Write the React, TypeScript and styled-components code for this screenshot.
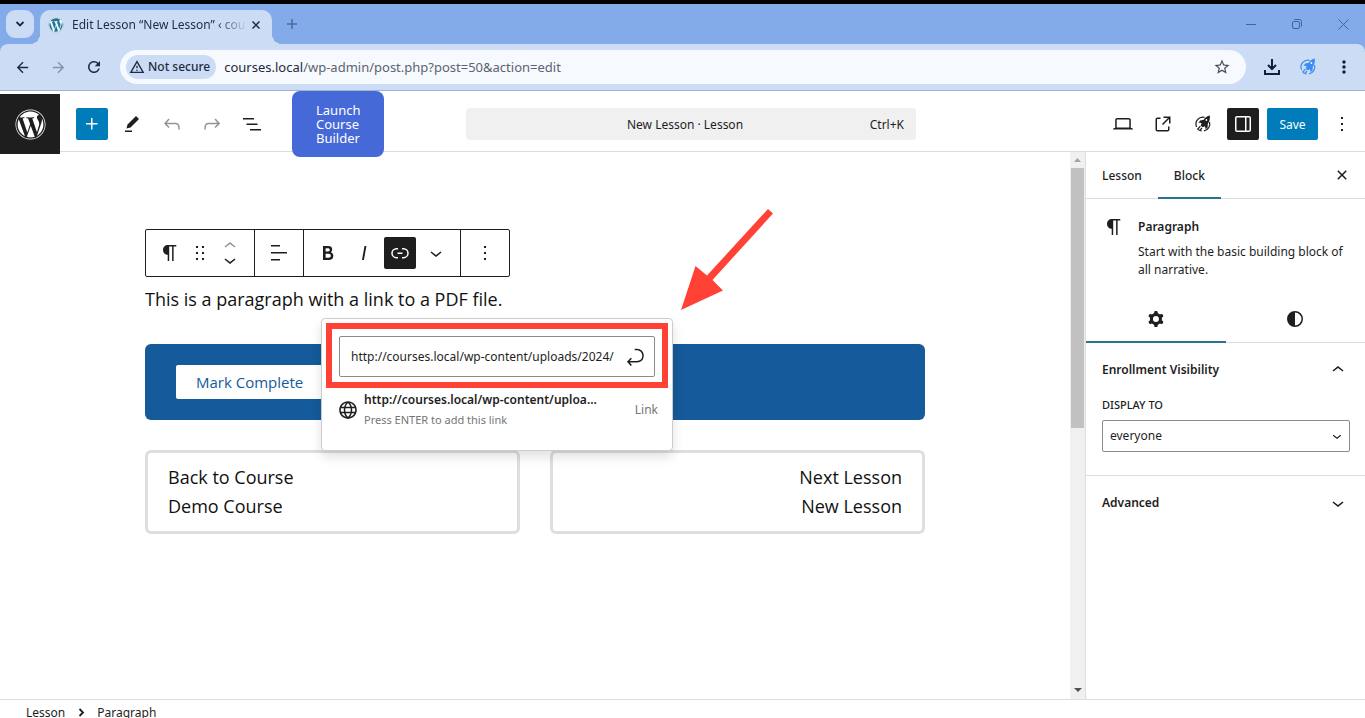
import React from "react";
import styled, { createGlobalStyle, css } from "styled-components";
import { FaWordpress } from "react-icons/fa";
import {
  MdArrowBack,
  MdArrowForward,
  MdRefresh,
  MdStarOutline,
  MdMoreVert,
  MdOutlineWarningAmber,
} from "react-icons/md";

const uiFont = `"Noto Sans", "Open Sans", sans-serif`;
const contentFont = `"Open Sans", "Noto Sans", sans-serif`;

const color = {
  ink: "#1e1e1e",
  line: "#dddddd",
  accent: "#007cba",
  tab: "#2a7391",
  frame: "#84abe9",
  chrome: "#ccdcf5",
  course: "#155a9a",
  mark: "#ff4136",
};

const GlobalStyle = createGlobalStyle`
  *, *::before, *::after { box-sizing: border-box; }
  body { margin: 0; background: #fff; color: ${color.ink}; font: 400 12px/18px ${uiFont}; }
  button, input, select { font: inherit; color: inherit; margin: 0; }
  button { border: 0; padding: 0; background: none; cursor: pointer; }
  h2, p { margin: 0; }
`;

const Screen = styled.div`
  display: flex;
  flex-direction: column;
  height: 100vh;
  overflow: hidden;
`;

/* Browser frame */

const Browser = styled.div`
  flex: none;
  background: ${color.frame};
  border-top: 4px solid #000;
`;

const TabStrip = styled.div`
  display: flex;
  height: 40px;
`;

const TabSearch = styled.button`
  display: grid;
  place-items: center;
  width: 28px;
  height: 28px;
  margin: 6px 6px 0;
  border-radius: 9px;
  background: ${color.chrome};
`;

const Tab = styled.div`
  position: relative;
  display: flex;
  align-items: center;
  width: 232px;
  height: 34px;
  margin-top: 6px;
  padding: 0 8px 4px;
  border-radius: 10px 10px 0 0;
  background: ${color.chrome};

  &::before,
  &::after {
    content: "";
    position: absolute;
    bottom: 0;
    width: 10px;
    height: 10px;
  }
  &::before {
    right: 100%;
    background: radial-gradient(circle at 0 0, transparent 10px, ${color.chrome} 10px);
  }
  &::after {
    left: 100%;
    background: radial-gradient(circle at 100% 0, transparent 10px, ${color.chrome} 10px);
  }
`;

const Favicon = styled(FaWordpress)`
  flex: none;
  margin-right: 8px;
  border-radius: 50%;
  background: #f2f8fb;
  color: #25759b;
`;

const TabTitle = styled.span`
  flex: 1;
  white-space: nowrap;
  color: #1c2b41;
  mask-image: linear-gradient(to right, #000 82%, transparent);
`;

const PlainButton = styled.button<{ $size?: number; $tone?: string }>`
  display: grid;
  place-items: center;
  flex: none;
  width: ${(p) => p.$size ?? 24}px;
  height: ${(p) => p.$size ?? 24}px;
  color: ${(p) => p.$tone ?? color.ink};
`;

const NewTab = styled(PlainButton)`
  margin: 8px 0 0 8px;
`;

const WindowButtons = styled.div`
  display: flex;
  align-items: center;
  gap: 22px;
  margin-left: auto;
  padding-right: 10px;
`;

const AddressRow = styled.div`
  display: flex;
  align-items: center;
  height: 47px;
  padding: 0 9px 0 10px;
  background: ${color.chrome};
  border-bottom: 1px solid #a3b3cc;
  border-radius: 8px 8px 0 0;
`;

const NavButtons = styled.div`
  display: flex;
  gap: 12px;
  padding-right: 14px;
`;

const AddressBar = styled.div`
  display: flex;
  align-items: center;
  flex: 1;
  height: 34px;
  padding: 0 12px 0 6px;
  border-radius: 17px;
  background: #f6f9fe;
`;

const Security = styled.button`
  display: flex;
  align-items: center;
  gap: 3px;
  height: 24px;
  padding: 0 6px 0 3px;
  border-radius: 12px;
  background: ${color.chrome};
  color: #1c2b41;
  font-weight: 500;
`;

const Url = styled.div`
  flex: 1;
  padding-left: 8px;
  font-size: 13px;
  color: #5b6470;
`;

const Host = styled.span`
  color: #1f2a3a;
`;

const ChromeActions = styled.div`
  display: flex;
  gap: 12px;
  padding-left: 14px;
`;

/* Editor header */

const EditorHeader = styled.header`
  display: grid;
  grid-template-columns: 1fr 450px 449px;
  flex: none;
  height: 61px;
  border-bottom: 1px solid ${color.line};
`;

const HeaderStart = styled.div`
  display: flex;
  align-items: flex-start;
  padding-top: 3px;
`;

const HomeLink = styled.a`
  display: grid;
  place-items: center;
  position: relative;
  width: 60px;
  height: 60px;
  margin-right: 16px;
  background: ${color.ink};
  color: #fff;
`;

const Tools = styled.div`
  display: flex;
  gap: 8px;
  padding-top: 14px;
`;

const ToolButton = styled.button<{ $look?: "primary" | "pressed"; $dim?: boolean }>`
  display: grid;
  place-items: center;
  width: 32px;
  height: 32px;
  border-radius: 2px;
  color: ${(p) => (p.$dim ? "#949494" : color.ink)};
  ${(p) =>
    p.$look &&
    css`
      background: ${p.$look === "primary" ? color.accent : color.ink};
      color: #fff;
    `}
`;

const LaunchButton = styled.button`
  position: relative;
  width: 92px;
  height: 66px;
  margin: -3px 0 0 24px;
  padding: 0 24px;
  border-radius: 8px;
  background: #4669d8;
  color: #fff;
  font-size: 13px;
  line-height: 14px;
  text-align: left;
`;

const DocumentBar = styled.button`
  display: grid;
  grid-template-columns: 1fr auto 1fr;
  align-items: center;
  height: 32px;
  margin-top: 17px;
  padding: 2px 12px 0;
  border-radius: 4px;
  background: #f0f0f0;
`;

const Shortcut = styled.span`
  text-align: right;
`;

const DocumentTitle = styled.span`
  grid-column: 2;
  padding-right: 12px;
`;

const HeaderEnd = styled.div`
  display: flex;
  justify-content: flex-end;
  gap: 8px;
  padding: 17px 7px 0 0;
`;

const SaveButton = styled.button`
  width: 51px;
  height: 32px;
  padding-top: 2px;
  border-radius: 2px;
  background: ${color.accent};
  color: #fff;
`;

/* Canvas */

const Workspace = styled.div`
  display: flex;
  flex: 1;
  min-height: 0;
`;

const Canvas = styled.main`
  flex: 1;
  min-width: 0;
  padding-top: 77px;
  font-family: ${contentFont};
`;

const Column = styled.div`
  position: relative;
  max-width: 780px;
  margin: 0 auto;
`;

const BlockToolbar = styled.div`
  display: inline-flex;
  height: 48px;
  border: 1px solid ${color.ink};
  border-radius: 2px;
  vertical-align: top;
`;

const ToolbarGroup = styled.div<{ $pad?: number }>`
  display: flex;
  align-items: center;
  padding: 0 ${(p) => p.$pad ?? 8}px;
  & + & {
    border-left: 1px solid ${color.ink};
  }
`;

const BlockButton = styled(ToolButton)<{ $wide?: boolean }>`
  width: ${(p) => (p.$wide ? 36 : 32)}px;
  margin: 0 ${(p) => (p.$look ? 2 : 0)}px;
`;

const DragHandle = styled(BlockButton)`
  width: 28px;
`;

const Movers = styled.div`
  display: flex;
  flex-direction: column;
  width: 32px;
`;

const MoverButton = styled.button<{ $dim?: boolean }>`
  display: flex;
  align-items: center;
  justify-content: center;
  height: 14px;
  color: ${(p) => (p.$dim ? "#949494" : color.ink)};
`;

const Paragraph = styled.p`
  padding: 8px 0 30px;
  font-size: 18px;
  line-height: 29px;
  color: #111;
`;

const CompleteBar = styled.div`
  display: flex;
  align-items: center;
  height: 76px;
  padding: 0 31px;
  border-radius: 6px;
  background: ${color.course};
`;

const CompleteButton = styled.button`
  height: 34px;
  padding: 0 20px;
  border-radius: 2px;
  background: #fff;
  color: ${color.course};
  font-size: 15px;
`;

const LessonNav = styled.nav`
  display: grid;
  grid-template-columns: 1fr 1fr;
  gap: 30px;
  margin-top: 30px;
`;

const NavCard = styled.a<{ $end?: boolean }>`
  display: block;
  padding: 10px 20px;
  border: 3px solid #dedede;
  border-radius: 6px;
  color: #111;
  font-size: 18px;
  line-height: 29px;
  text-align: ${(p) => (p.$end ? "right" : "left")};
  text-decoration: none;
`;

const NavLine = styled.span`
  display: block;
`;

const LinkPopover = styled.div`
  position: absolute;
  top: 89px;
  left: 176px;
  width: 352px;
  height: 133px;
  padding: 4px;
  border: 1px solid #ccc;
  border-radius: 4px;
  background: #fff;
  font-family: ${uiFont};
  box-shadow: 0 6px 12px rgba(0, 0, 0, 0.12);
`;

const Highlight = styled.div`
  padding: 7px 7px 5px;
  border: 6px solid ${color.mark};
`;

const UrlField = styled.div`
  display: flex;
  align-items: center;
  height: 41px;
  padding: 0 7px 0 11px;
  border: 1px solid #8a8a8a;
  border-radius: 2px;
`;

const UrlInput = styled.input`
  flex: 1;
  min-width: 0;
  padding: 0;
  border: 0;
  outline: 0;
  background: none;
`;

const Suggestion = styled.button`
  display: flex;
  align-items: center;
  gap: 4px;
  width: 100%;
  padding: 2px 10px 0;
  text-align: left;
`;

const SuggestionText = styled.span`
  display: flex;
  flex-direction: column;
  flex: 1;
  line-height: 20px;
  white-space: nowrap;
`;

const SuggestionTitle = styled.span`
  font-weight: 600;
`;

const SuggestionHint = styled.span`
  font-size: 11px;
  color: #757575;
`;

const SuggestionKind = styled.span`
  color: #757575;
`;

const PointerArrow = styled.svg`
  position: absolute;
  top: -20px;
  left: 536px;
`;

/* Scrollbar */

const ScrollTrack = styled.div`
  display: flex;
  flex-direction: column;
  width: 15px;
  flex: none;
  background: #f0f0f0;
`;

const ScrollThumb = styled.div`
  margin: 0 1px;
  flex: 50;
  background: #c1c1c1;
`;

const ScrollSpace = styled.div`
  flex: 49;
`;

const ScrollArrow = styled.svg`
  flex: none;
  display: block;
`;

/* Sidebar */

const Sidebar = styled.aside`
  width: 280px;
  flex: none;
  border-left: 1px solid ${color.line};
`;

const SidebarTabs = styled.div`
  display: flex;
  align-items: center;
  height: 47px;
  padding-right: 11px;
  border-bottom: 1px solid ${color.line};
`;

const SidebarTab = styled.button<{ $active?: boolean }>`
  align-self: stretch;
  margin-bottom: -1px;
  padding: 2px 16px 0;
  font-weight: 500;
  border-bottom: 2px solid ${(p) => (p.$active ? color.tab : "transparent")};
`;

const CloseSidebar = styled(PlainButton)`
  margin-left: auto;
`;

const BlockCard = styled.div`
  display: grid;
  grid-template-columns: 24px 1fr;
  gap: 12px;
  padding: 16px 12px 16px 16px;
`;

const BlockCardTitle = styled.h2`
  padding: 3px 0 7px;
  font-size: 12px;
  line-height: 18px;
  font-weight: 600;
`;

const PanelTabs = styled.div`
  display: grid;
  grid-template-columns: 1fr 1fr;
  height: 48px;
  border-bottom: 1px solid ${color.line};
`;

const PanelTab = styled.button<{ $active?: boolean }>`
  display: grid;
  place-items: center;
  margin-bottom: -1px;
  padding-top: 1px;
  border-bottom: 2px solid ${(p) => (p.$active ? color.tab : "transparent")};
`;

const Panel = styled.section`
  padding: 0 15px 0 16px;
  border-bottom: 1px solid ${color.line};
  &:last-child {
    border-bottom: 0;
  }
`;

const PanelToggle = styled.button`
  display: flex;
  align-items: center;
  justify-content: space-between;
  width: 100%;
  height: 53px;
  font-weight: 600;
`;

const FieldLabel = styled.label`
  display: block;
  padding-bottom: 6px;
  font-size: 11px;
  font-weight: 500;
`;

const SelectBox = styled.div`
  position: relative;
  margin-bottom: 23px;
`;

const Select = styled.select`
  display: block;
  width: 100%;
  height: 32px;
  padding: 0 7px;
  border: 1px solid #8a8a8a;
  border-radius: 2px;
  appearance: none;
  background: #fff;
`;

const SelectArrow = styled.span`
  position: absolute;
  top: 7px;
  right: 4px;
  height: 18px;
  pointer-events: none;
`;

/* Footer */

const Footer = styled.footer`
  display: flex;
  align-items: flex-start;
  gap: 8px;
  height: 19px;
  flex: none;
  padding-left: 26px;
  border-top: 1px solid ${color.line};
`;

const Crumb = styled.button`
  line-height: 25px;
`;

const CrumbMark = styled.svg`
  flex: none;
`;

const paths = {
  plus: "M11 12.5V17.5H12.5V12.5H17.5V11H12.5V6H11V11H6V12.5H11Z",
  edit: "m19 7-3-3-8.5 8.5-1 4 4-1L19 7Zm-7 11.5H5V20h7v-1.5Z",
  undo: "M18.3 11.7c-.6-.6-1.4-.9-2.3-.9H6.7l2.9-3.3-1.1-1-4.5 5L8.5 16l1-1-2.7-2.7H16c.5 0 .9.2 1.3.5 1 1 1 3.4 1 4.5v.3h1.5v-.2c0-1.5 0-4.3-1.5-5.7z",
  redo: "M15.6 6.5l-1.1 1 2.9 3.3H8c-.9 0-1.7.3-2.3.9-1.4 1.5-1.4 4.2-1.4 5.6v.2h1.5v-.3c0-1.1 0-3.5 1-4.5.3-.3.7-.5 1.3-.5h9.2L14.5 15l1.1 1.1 4.6-4.6-4.6-5z",
  list: "M3 6h11v1.5H3V6Zm3.5 5.5h11V13h-11v-1.5ZM21 17H10v1.5h11V17Z",
  desktop:
    "M20.5 16h-.7V8c0-1.1-.9-2-2-2H6.2c-1.1 0-2 .9-2 2v8h-.7c-.8 0-1.5.7-1.5 1.5h20c0-.8-.7-1.5-1.5-1.5zM5.7 8c0-.3.2-.5.5-.5h11.6c.3 0 .5.2.5.5v7.6H5.7V8z",
  external:
    "M19.5 4.5h-7V6h4.44l-5.97 5.97 1.06 1.06L18 7.06v4.44h1.5v-7Zm-13 1a2 2 0 0 0-2 2v10a2 2 0 0 0 2 2h10a2 2 0 0 0 2-2v-3H17v3a.5.5 0 0 1-.5.5h-10a.5.5 0 0 1-.5-.5v-10a.5.5 0 0 1 .5-.5h3V5.5h-3Z",
  drawer:
    "M18 4H6c-1.1 0-2 .9-2 2v12c0 1.1.9 2 2 2h12c1.1 0 2-.9 2-2V6c0-1.1-.9-2-2-2zm-4 14.5H6c-.3 0-.5-.2-.5-.5V6c0-.3.2-.5.5-.5h8v13zm4.5-.5c0 .3-.2.5-.5.5h-2.5v-13H18c.3 0 .5.2.5.5v12z",
  more: "M13 19h-2v-2h2v2zm0-6h-2v-2h2v2zm0-6h-2V5h2v2z",
  paragraph:
    "M18.3 4H9.9v-.1l-.9.2c-2.3.4-4 2.4-4 4.8s1.7 4.4 4 4.8l.7.1V20h1.5V5.5h2.9V20h1.5V5.5h2.7V4z",
  drag: "M8 7h2V5H8v2zm0 6h2v-2H8v2zm0 6h2v-2H8v2zm6-14v2h2V5h-2zm0 8h2v-2h-2v2zm0 6h2v-2h-2v2z",
  up: "M6.5 12.4L12 8l5.5 4.4-.9 1.2L12 10l-4.5 3.6-1-1.2z",
  down: "M17.5 11.6L12 16l-5.5-4.4.9-1.2L12 14l4.5-3.6 1 1.2z",
  align: "M13 5.5H4V4h9v1.5Zm7 7H4V11h16v1.5Zm-7 7H4V18h9v1.5Z",
  bold: "M14.7 11.3c1-.6 1.5-1.6 1.5-3 0-2.3-1.3-3.4-4-3.4H7v14h5.8c1.4 0 2.5-.3 3.3-1 .8-.7 1.2-1.7 1.2-2.9.1-1.9-.8-3.1-2.6-3.7zm-5.1-4h2.3c.6 0 1.1.1 1.4.4.3.3.5.7.5 1.2s-.2 1-.5 1.2c-.3.3-.8.4-1.4.4H9.6V7.3zm4.6 9c-.4.3-1 .4-1.7.4H9.6v-3.9h2.9c.7 0 1.3.2 1.7.5.4.3.6.8.6 1.5s-.2 1.2-.6 1.5z",
  italic: "M12.5 5L10 19h1.9l2.5-14z",
  link: "M10 17.389H8.444A5.194 5.194 0 1 1 8.444 7H10v1.5H8.444a3.694 3.694 0 0 0 0 7.389H10v1.5ZM14 7h1.556a5.194 5.194 0 0 1 0 10.39H14v-1.5h1.556a3.694 3.694 0 0 0 0-7.39H14V7Zm-4.5 6h5v-1.5h-5V13Z",
  globe:
    "M12 3.3c-4.8 0-8.8 3.9-8.8 8.8 0 4.8 3.9 8.8 8.8 8.8s8.8-3.9 8.8-8.8-4-8.8-8.8-8.8zm6.5 5.5h-2.6C15.4 7.3 14.8 6 14 5c2 .6 3.6 2 4.5 3.8zm.7 3.2c0 .6-.1 1.2-.2 1.8h-2.9c.1-.6.1-1.2.1-1.8s-.1-1.2-.1-1.8H19c.2.6.2 1.2.2 1.8zM12 18.7c-1-.7-1.8-1.9-2.3-3.5h4.6c-.5 1.6-1.3 2.9-2.3 3.5zm-2.6-4.9c-.1-.6-.1-1.1-.1-1.8 0-.6.1-1.2.1-1.8h5.2c.1.6.1 1.1.1 1.8s-.1 1.2-.1 1.8H9.4zM4.8 12c0-.6.1-1.2.2-1.8h2.9c-.1.6-.1 1.2-.1 1.8 0 .6.1 1.2.1 1.8H5c-.2-.6-.2-1.2-.2-1.8zM12 5.3c1 .7 1.8 1.9 2.3 3.5H9.7c.5-1.6 1.3-2.9 2.3-3.5zM10 5c-.8 1-1.4 2.3-1.8 3.8H5.5C6.4 7 8 5.6 10 5zM5.5 15.3h2.6c.4 1.5 1 2.8 1.8 3.7-1.8-.6-3.5-2-4.4-3.7zM14 19c.8-1 1.4-2.2 1.8-3.7h2.6C17.6 17 16 18.4 14 19z",
  enter:
    "m6.734 16.106 2.176-2.38-1.093-1.028-3.846 4.158 3.846 4.157 1.093-1.027-2.176-2.38h2.811c1.125 0 2.25.03 3.374 0 1.428-.001 3.362-.25 4.963-1.277 1.66-1.065 2.868-2.906 2.868-5.859 0-2.479-1.327-4.896-3.65-5.93-1.82-.813-3.044-.8-4.806-.788l-.567.002v1.5c.184 0 .368 0 .553-.002 1.82-.007 2.704-.014 4.21.657 1.854.827 2.76 2.657 2.76 4.561 0 2.472-.973 3.824-2.178 4.596-1.258.807-2.864 1.04-4.163 1.04h-.02c-1.115.03-2.229 0-3.344 0H6.734Z",
  close:
    "M12 13.06l3.712 3.713 1.061-1.06L13.061 12l3.712-3.712-1.06-1.06L12 10.938 8.288 7.227l-1.061 1.06L10.939 12l-3.712 3.712 1.06 1.061L12 13.061z",
  cog: "M10.289 4.836A1 1 0 0111.275 4h1.306a1 1 0 01.987.836l.244 1.466c.787.26 1.503.679 2.108 1.218l1.393-.522a1 1 0 011.216.437l.653 1.13a1 1 0 01-.23 1.273l-1.148.944a6.025 6.025 0 010 2.435l1.149.946a1 1 0 01.23 1.272l-.653 1.13a1 1 0 01-1.216.437l-1.394-.522c-.605.54-1.32.958-2.108 1.218l-.244 1.466a1 1 0 01-.987.836h-1.306a1 1 0 01-.986-.836l-.244-1.466a5.995 5.995 0 01-2.108-1.218l-1.394.522a1 1 0 01-1.217-.436l-.653-1.131a1 1 0 01.23-1.272l1.149-.946a6.026 6.026 0 010-2.435l-1.148-.944a1 1 0 01-.23-1.272l.653-1.131a1 1 0 011.217-.437l1.393.522a5.994 5.994 0 012.108-1.218l.244-1.466zM14.929 12a3 3 0 11-6 0 3 3 0 016 0z",
  contrast:
    "M20 12a8 8 0 1 1-16 0 8 8 0 0 1 16 0Zm-1.5 0a6.5 6.5 0 0 1-6.5 6.5v-13a6.5 6.5 0 0 1 6.5 6.5Z",
};

function Icon({ name, size = 24 }: { name: keyof typeof paths; size?: number }) {
  return (
    <svg width={size} height={size} viewBox="0 0 24 24" fill="currentColor" aria-hidden="true">
      <path fillRule="evenodd" clipRule="evenodd" d={paths[name]} />
    </svg>
  );
}

function RocketIcon() {
  return (
    <svg width="18" height="18" viewBox="0 0 18 18" fill="none" aria-hidden="true">
      <path
        d="M10.500 2.300A7 7 0 0 0 2.600 12M15.500 7A7 7 0 0 1 10 15.900M4.200 14.500a7 7 0 0 0 3.600 1.500"
        stroke="currentColor"
        strokeWidth="1.200"
      />
      <path
        d="M15.800.600c-2.600.500-4.600 1.800-6 4.200L6.200 5.500 4.600 7.700l3 .300-.900 2.400 2 1.800 2.300-1 .7 3 1.900-1.700.2-3.700c1.700-2.200 2.400-5 2-8.200Z"
        fill="currentColor"
      />
      <path d="m6.400 11.200-3 3.300M8 13l-1.800 2" stroke="currentColor" strokeWidth="1.200" />
      <circle cx="12.400" cy="5" r=".900" fill="#fff" />
    </svg>
  );
}

function BrowserFrame() {
  return (
    <Browser>
      <TabStrip>
        <TabSearch aria-label="Search tabs">
          <svg width="10" height="6" viewBox="0 0 10 6" fill="none">
            <path d="m1.500 1 3.500 3.500L8.500 1" stroke="#1c2b41" strokeWidth="1.800" />
          </svg>
        </TabSearch>
        <Tab>
          <Favicon size={16} />
          <TabTitle>Edit Lesson “New Lesson” ‹ cou</TabTitle>
          <PlainButton $size={16} $tone="#1c2b41" aria-label="Close tab">
            <svg width="8" height="8" viewBox="0 0 8 8">
              <path d="m.5.5 7 7m0-7-7 7" stroke="currentColor" strokeWidth="1.500" />
            </svg>
          </PlainButton>
        </Tab>
        <NewTab $tone="#4c6a9c" aria-label="New tab">
          <svg width="10" height="10" viewBox="0 0 10 10">
            <path d="M5 0v10M0 5h10" stroke="currentColor" strokeWidth="1.500" />
          </svg>
        </NewTab>
        <WindowButtons>
          <PlainButton $tone="#4263a0" aria-label="Minimize">
            <svg width="10" height="10" viewBox="0 0 10 10">
              <path d="M0 5.500h10" stroke="currentColor" />
            </svg>
          </PlainButton>
          <PlainButton $tone="#4263a0" aria-label="Restore">
            <svg width="10" height="10" viewBox="0 0 10 10" fill="none">
              <rect x=".5" y="2.500" width="7" height="7" rx="1.500" stroke="currentColor" />
              <path d="M2.500.5h5a2 2 0 0 1 2 2v5" stroke="currentColor" />
            </svg>
          </PlainButton>
          <PlainButton $tone="#4263a0" aria-label="Close">
            <svg width="11" height="11" viewBox="0 0 11 11">
              <path d="m.5.5 10 10m0-10-10 10" stroke="currentColor" />
            </svg>
          </PlainButton>
        </WindowButtons>
      </TabStrip>
      <AddressRow>
        <NavButtons>
          <PlainButton $tone="#1c2b41" aria-label="Back">
            <MdArrowBack size={17} />
          </PlainButton>
          <PlainButton $tone="#8492ab" aria-label="Forward">
            <MdArrowForward size={17} />
          </PlainButton>
          <PlainButton $tone="#1c2b41" aria-label="Reload">
            <MdRefresh size={18} />
          </PlainButton>
        </NavButtons>
        <AddressBar>
          <Security>
            <MdOutlineWarningAmber size={16} />
            Not secure
          </Security>
          <Url>
            <Host>courses.local</Host>/wp-admin/post.php?post=50&amp;action=edit
          </Url>
          <PlainButton $tone="#474d57" aria-label="Bookmark">
            <MdStarOutline size={18} />
          </PlainButton>
        </AddressBar>
        <ChromeActions>
          <PlainButton $tone="#0c1f3d" aria-label="Downloads">
            <svg width="16" height="16" viewBox="0 0 16 16" fill="none">
              <path d="M8 0v9.500M4 6l4 4 4-4M1 11v4h14v-4" stroke="currentColor" strokeWidth="2" />
            </svg>
          </PlainButton>
          <PlainButton $tone="#3d8cf0" aria-label="Extension">
            <RocketIcon />
          </PlainButton>
          <PlainButton $tone="#0c1f3d" aria-label="Browser menu">
            <MdMoreVert size={20} />
          </PlainButton>
        </ChromeActions>
      </AddressRow>
    </Browser>
  );
}

function Header() {
  return (
    <EditorHeader>
      <HeaderStart>
        <HomeLink href="#" aria-label="View lessons">
          <FaWordpress size={31} />
        </HomeLink>
        <Tools>
          <ToolButton $look="primary" aria-label="Add block"><Icon name="plus" /></ToolButton>
          <ToolButton aria-label="Tools"><Icon name="edit" /></ToolButton>
          <ToolButton $dim aria-label="Undo"><Icon name="undo" /></ToolButton>
          <ToolButton $dim aria-label="Redo"><Icon name="redo" /></ToolButton>
          <ToolButton aria-label="Document overview"><Icon name="list" /></ToolButton>
        </Tools>
        <LaunchButton>Launch Course Builder</LaunchButton>
      </HeaderStart>
      <DocumentBar>
        <DocumentTitle>New Lesson · Lesson</DocumentTitle>
        <Shortcut>Ctrl+K</Shortcut>
      </DocumentBar>
      <HeaderEnd>
        <ToolButton aria-label="View"><Icon name="desktop" /></ToolButton>
        <ToolButton aria-label="View lesson"><Icon name="external" /></ToolButton>
        <ToolButton aria-label="Launch panel"><RocketIcon /></ToolButton>
        <ToolButton $look="pressed" aria-label="Settings"><Icon name="drawer" /></ToolButton>
        <SaveButton>Save</SaveButton>
        <ToolButton aria-label="Options"><Icon name="more" /></ToolButton>
      </HeaderEnd>
    </EditorHeader>
  );
}

function LinkEditor() {
  return (
    <LinkPopover>
      <Highlight>
        <UrlField>
          <UrlInput aria-label="Link URL" defaultValue="http://courses.local/wp-content/uploads/2024/" />
          <PlainButton aria-label="Submit"><Icon name="enter" /></PlainButton>
        </UrlField>
      </Highlight>
      <Suggestion>
        <Icon name="globe" />
        <SuggestionText>
          <SuggestionTitle>http://courses.local/wp-content/uploa...</SuggestionTitle>
          <SuggestionHint>Press ENTER to add this link</SuggestionHint>
        </SuggestionText>
        <SuggestionKind>Link</SuggestionKind>
      </Suggestion>
    </LinkPopover>
  );
}

function Editor() {
  return (
    <Canvas>
      <Column>
        <BlockToolbar role="toolbar" aria-label="Block tools">
          <ToolbarGroup>
            <BlockButton aria-label="Paragraph"><Icon name="paragraph" /></BlockButton>
            <DragHandle aria-label="Drag"><Icon name="drag" /></DragHandle>
            <Movers>
              <MoverButton $dim aria-label="Move up"><Icon name="up" /></MoverButton>
              <MoverButton aria-label="Move down"><Icon name="down" /></MoverButton>
            </Movers>
          </ToolbarGroup>
          <ToolbarGroup>
            <BlockButton aria-label="Align text"><Icon name="align" /></BlockButton>
          </ToolbarGroup>
          <ToolbarGroup $pad={6}>
            <BlockButton $wide aria-label="Bold"><Icon name="bold" /></BlockButton>
            <BlockButton $wide aria-label="Italic"><Icon name="italic" /></BlockButton>
            <BlockButton $look="pressed" aria-label="Link"><Icon name="link" /></BlockButton>
            <BlockButton $wide aria-label="More"><Icon name="down" /></BlockButton>
          </ToolbarGroup>
          <ToolbarGroup>
            <BlockButton aria-label="Options"><Icon name="more" /></BlockButton>
          </ToolbarGroup>
        </BlockToolbar>
        <Paragraph>This is a paragraph with a link to a PDF file.</Paragraph>
        <CompleteBar>
          <CompleteButton>Mark Complete</CompleteButton>
        </CompleteBar>
        <LessonNav>
          <NavCard href="#">
            <NavLine>Back to Course</NavLine>
            <NavLine>Demo Course</NavLine>
          </NavCard>
          <NavCard href="#" $end>
            <NavLine>Next Lesson</NavLine>
            <NavLine>New Lesson</NavLine>
          </NavCard>
        </LessonNav>
        <LinkEditor />
        <PointerArrow width="94" height="102" viewBox="0 0 94 102" aria-hidden="true">
          <path
            d="M87 0 92 4.500 31.500 71 42 81.500 0 101 14.500 57 26 66.500Z"
            fill={color.mark}
          />
        </PointerArrow>
      </Column>
    </Canvas>
  );
}

function Settings() {
  return (
    <Sidebar>
      <SidebarTabs>
        <SidebarTab>Lesson</SidebarTab>
        <SidebarTab $active>Block</SidebarTab>
        <CloseSidebar aria-label="Close settings"><Icon name="close" /></CloseSidebar>
      </SidebarTabs>
      <BlockCard>
        <Icon name="paragraph" />
        <div>
          <BlockCardTitle>Paragraph</BlockCardTitle>
          <p>Start with the basic building block of all narrative.</p>
        </div>
      </BlockCard>
      <PanelTabs>
        <PanelTab $active aria-label="Settings"><Icon name="cog" /></PanelTab>
        <PanelTab aria-label="Styles"><Icon name="contrast" /></PanelTab>
      </PanelTabs>
      <Panel>
        <PanelToggle>Enrollment Visibility<Icon name="up" /></PanelToggle>
        <FieldLabel htmlFor="display-to">DISPLAY TO</FieldLabel>
        <SelectBox>
          <Select id="display-to" defaultValue="everyone">
            <option value="everyone">everyone</option>
            <option value="enrolled">enrolled</option>
          </Select>
          <SelectArrow><Icon name="down" size={18} /></SelectArrow>
        </SelectBox>
      </Panel>
      <Panel>
        <PanelToggle>Advanced<Icon name="down" /></PanelToggle>
      </Panel>
    </Sidebar>
  );
}

export default function App() {
  return (
    <Screen>
      <GlobalStyle />
      <BrowserFrame />
      <Header />
      <Workspace>
        <Editor />
        <ScrollTrack>
          <ScrollArrow width="15" height="16" viewBox="0 0 15 16">
            <path d="M4 10h7L7.500 6Z" fill="#a3a3a3" />
          </ScrollArrow>
          <ScrollThumb />
          <ScrollSpace />
          <ScrollArrow width="15" height="16" viewBox="0 0 15 16">
            <path d="M4 5h8L8 9Z" fill="#505050" />
          </ScrollArrow>
        </ScrollTrack>
        <Settings />
      </Workspace>
      <Footer>
        <Crumb>Lesson</Crumb>
        <CrumbMark width="16" height="25" viewBox="0 0 16 25" fill="none">
          <path d="m6.500 9 3.500 3.500L6.500 16" stroke={color.ink} strokeWidth="1.800" />
        </CrumbMark>
        <Crumb>Paragraph</Crumb>
      </Footer>
    </Screen>
  );
}
